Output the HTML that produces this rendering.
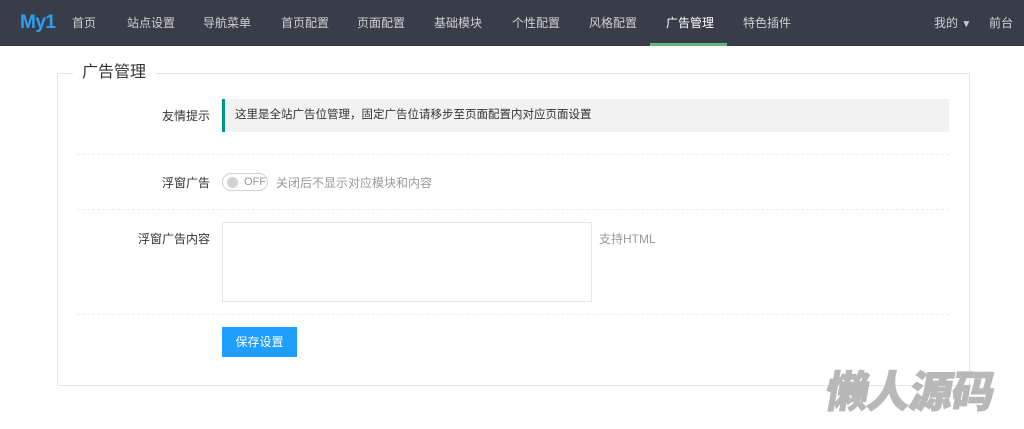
<!DOCTYPE html>
<html><head><meta charset="utf-8"><style>
*{margin:0;padding:0;box-sizing:border-box}
body{width:1024px;height:429px;background:#fff;font-family:"Liberation Sans","Noto Sans CJK SC",sans-serif;font-size:12px;color:#333;position:relative;overflow:hidden}
.nav{position:absolute;left:0;top:0;width:1024px;height:46px;background:#393d49}
.nav span{position:absolute;top:0;line-height:46px;color:rgba(255,255,255,.75);font-size:12px}
.logo{position:absolute;left:20px;top:11px;font-size:19px;font-weight:bold;color:#2d9ff0;line-height:24px;letter-spacing:-0.5px}
.act{color:#fff!important}
.bar{position:absolute;left:650px;top:43px;width:77px;height:3px;background:#5fb878}
.fs{position:absolute;left:57px;top:73px;width:913px;height:313px;border:1px solid #e6e6e6;border-radius:2px}
.lg{position:absolute;left:73px;top:62px;padding:0 9px;background:#fff;font-size:16px;color:#333;line-height:22px}
.lb{position:absolute;width:140px;left:70px;text-align:right;font-size:12px;color:#333}
.tip{position:absolute;left:222px;top:99px;width:727px;height:33px;background:#f2f2f2;border-left:3px solid #009688;line-height:33px;padding-left:10px;font-size:11.5px;color:#333}
.hr{position:absolute;left:77px;width:872px;border-top:1px dashed #eee}
.sw{position:absolute;left:222px;top:173px;width:46px;height:18px;border:1px solid #d2d2d2;border-radius:20px}
.sw i{position:absolute;left:4px;top:3px;width:11px;height:11px;border-radius:50%;background:#d2d2d2}
.sw b{position:absolute;left:21px;top:0;line-height:16px;font-weight:normal;color:#999;font-size:11px}
.ta{position:absolute;left:222px;top:222px;width:370px;height:80px;border:1px solid #e6e6e6}
.btn{position:absolute;left:222px;top:327px;width:75px;height:30px;background:#1e9fff;color:#fff;text-align:center;line-height:30px;font-size:12px}
.wm{position:absolute;left:826px;top:365px;font-size:43px;font-weight:900;color:#b8b8b8;line-height:56px;transform-origin:left center;transform:skewX(-10deg);-webkit-text-stroke:1px #b8b8b8;letter-spacing:-1px}
</style></head><body>
<div class="nav">
<div class="logo">My1</div>
<span style="left:72px">首页</span>
<span style="left:127px">站点设置</span>
<span style="left:203px">导航菜单</span>
<span style="left:281px">首页配置</span>
<span style="left:357px">页面配置</span>
<span style="left:434px">基础模块</span>
<span style="left:512px">个性配置</span>
<span style="left:589px">风格配置</span>
<span style="left:666px" class="act">广告管理</span>
<span style="left:743px">特色插件</span>
<span style="left:934px">我的 <span style="position:static;font-size:10px">▼</span></span>
<span style="left:989px">前台</span>
<div class="bar"></div>
</div>
<div class="fs"></div>
<div class="lg">广告管理</div>
<div class="lb" style="top:107px">友情提示</div>
<div class="tip">这里是全站广告位管理，固定广告位请移步至页面配置内对应页面设置</div>
<div class="hr" style="top:154px"></div>
<div class="lb" style="top:174px">浮窗广告</div>
<div class="sw"><i></i><b>OFF</b></div>
<div style="position:absolute;left:276px;top:174px;color:#999">关闭后不显示对应模块和内容</div>
<div class="hr" style="top:209px"></div>
<div class="lb" style="top:230px">浮窗广告内容</div>
<div class="ta"></div>
<div style="position:absolute;left:599px;top:230px;color:#999">支持HTML</div>
<div class="hr" style="top:314px"></div>
<div class="btn">保存设置</div>
<div class="wm">懒人源码</div>
</body></html>
